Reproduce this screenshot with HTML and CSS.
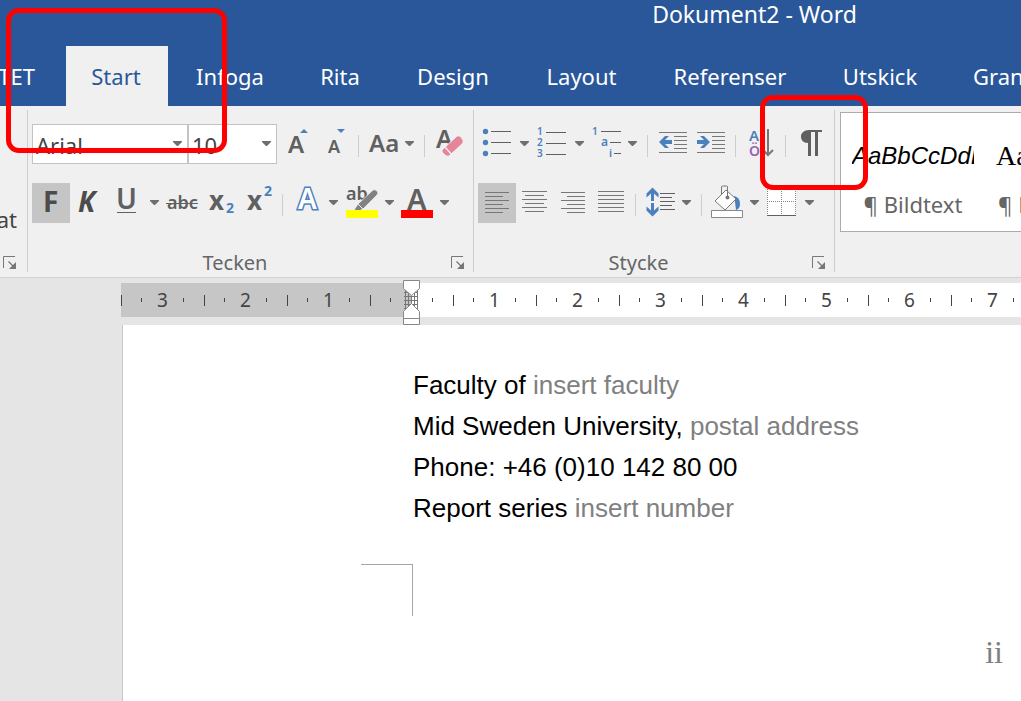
FILE: index.html
```html
<!DOCTYPE html>
<html lang="sv">
<head>
<meta charset="utf-8">
<title>Dokument2 - Word</title>
<link rel="stylesheet" href="styles.css">
</head>
<body>
<svg class="defs" aria-hidden="true">
  <symbol id="arrow" overflow="visible"><path d="M0 0h9v1l-4 4h-1l-4-4z" fill="#6f6f6f"/></symbol>
  <symbol id="launcher" viewBox="0 0 14 14"><path d="M.5 12V.5H12" fill="none" stroke="#777"/><path d="M5.500 5.500l5 5" stroke="#777" stroke-width="1.200"/><path d="M13 6v7H6z" fill="#777"/></symbol>
</svg>

<header class="titlebar">
  <h1 class="title">Dokument2 - Word</h1>
  <nav class="tabs">
    <a class="tab tab-cut" href="#">TET</a>
    <a class="tab tab-active" href="#">Start</a>
    <a class="tab w-124" href="#">Infoga</a>
    <a class="tab w-96" href="#">Rita</a>
    <a class="tab w-130" href="#">Design</a>
    <a class="tab w-127" href="#">Layout</a>
    <a class="tab w-170" href="#">Referenser</a>
    <a class="tab w-130" href="#">Utskick</a>
    <a class="tab tab-last" href="#">Granska</a>
  </nav>
</header>

<section class="ribbon">
  <div class="group group-clip">
    <span class="clip-text">at</span>
    <div class="group-foot"><button class="launch" aria-label="Urklipp"><svg width="14" height="14"><use href="#launcher"/></svg></button></div>
  </div>

  <div class="group">
    <div class="row">
      <span class="combo combo-font"><select aria-label="Teckensnitt"><option>Arial</option></select><svg class="chev" viewBox="0 0 9 5"><use href="#arrow"/></svg></span>
      <span class="combo combo-size"><select aria-label="Teckenstorlek"><option>10</option></select><svg class="chev" viewBox="0 0 9 5"><use href="#arrow"/></svg></span>
      <button class="tool" aria-label="Öka teckenstorlek"><svg width="38" height="40" viewBox="277 124 38 40"><text x="288" y="153" class="semi" font-size="24">A</text><path d="M300 133h8l-4-4z" fill="#4a80bd"/></svg></button>
      <button class="tool" aria-label="Minska teckenstorlek"><svg width="39" height="40" viewBox="315 124 39 40"><text x="328" y="153" class="semi" font-size="18">A</text><path d="M337 129h8l-4 4z" fill="#4a80bd"/></svg></button>
      <span class="sep"></span>
      <button class="tool" aria-label="Ändra skiftläge"><svg width="57" height="40" viewBox="363 124 57 40"><text x="369" y="152" class="semi" font-size="24">Aa</text><use href="#arrow" x="405" y="141"/></svg></button>
      <span class="sep"></span>
      <button class="tool" aria-label="Ta bort formatering"><svg width="40" height="40" viewBox="429 124 40 40"><text x="436" y="148" class="semi" font-size="25">A</text><path d="M442 150l15-14q2-1 4 1l2 3q1 2-1 4l-13 12q-2 1-4-1l-3-3z" fill="#e6859a" stroke="#f0f0f0"/><path d="M445 147l7 8" stroke="#f0f0f0" stroke-width="1.500"/></svg></button>
    </div>
    <div class="row">
      <button class="tool pressed" aria-label="Fet"><svg width="38" height="40" viewBox="32 183 38 40"><text x="43" y="212" font-weight="700" font-size="28">F</text></svg></button>
      <button class="tool" aria-label="Kursiv"><svg width="38" height="40" viewBox="70 183 38 40"><text x="78" y="212" class="dark" font-weight="700" font-style="italic" font-size="28">K</text></svg></button>
      <button class="tool" aria-label="Understruken"><svg width="55" height="40" viewBox="108 183 55 40"><text x="116" y="209" class="semi" font-size="28">U</text><path d="M117 212.500h19" stroke="#606060"/><use href="#arrow" x="150" y="200"/></svg></button>
      <button class="tool" aria-label="Genomstruken"><svg width="39" height="40" viewBox="163 183 39 40"><text x="167" y="209" font-size="18" class="semi">abc</text><path d="M166 203.500h32" stroke="#606060"/></svg></button>
      <button class="tool" aria-label="Nedsänkt"><svg width="38" height="40" viewBox="202 183 38 40"><text x="209" y="210" font-weight="700" font-size="26">x</text><text x="226" y="213" class="blue" font-weight="700" font-size="14">2</text></svg></button>
      <button class="tool" aria-label="Upphöjt"><svg width="38" height="40" viewBox="240 183 38 40"><text x="247" y="210" font-weight="700" font-size="26">x</text><text x="264" y="196" class="blue" font-weight="700" font-size="14">2</text></svg></button>
      <span class="sep"></span>
      <button class="tool" aria-label="Texteffekter"><svg width="54" height="40" viewBox="287 183 54 40"><text x="298" y="209" class="outline" font-size="28">A</text><use href="#arrow" x="329" y="200"/></svg></button>
      <button class="tool" aria-label="Överstrykningsfärg"><svg width="56" height="40" viewBox="341 183 56 40"><text x="346" y="200" class="semi" font-size="18">ab</text><path d="M354 210l4-6 15-14q2-1 4 1t0 4l-14 14-4 2z" fill="#828282" stroke="#f0f0f0" stroke-width=".8"/><path d="M358 204l5 5" stroke="#f0f0f0"/><path d="M346 210h32v8h-32z" fill="#ff0"/><use href="#arrow" x="385" y="200"/></svg></button>
      <button class="tool" aria-label="Teckenfärg"><svg width="55" height="40" viewBox="397 183 55 40"><text x="407" y="210" class="semi" font-size="29">A</text><path d="M401 210h32v8h-32z" fill="#f00"/><use href="#arrow" x="440" y="200"/></svg></button>
    </div>
    <div class="group-foot"><span class="group-name">Tecken</span><button class="launch" aria-label="Tecken"><svg width="14" height="14"><use href="#launcher"/></svg></button></div>
  </div>

  <div class="group">
    <div class="row">
      <button class="tool" aria-label="Punktlista"><svg width="55" height="40" viewBox="478 124 55 40"><g fill="#4a80bd"><circle cx="485.500" cy="131.500" r="2.700"/><circle cx="485.500" cy="142.500" r="2.700"/><circle cx="485.500" cy="153.500" r="2.700"/></g><path d="M491 131.500h20M491 142.500h20M491 153.500h20" stroke="#606060"/><use href="#arrow" x="520" y="141"/></svg></button>
      <button class="tool" aria-label="Numrering"><svg width="55" height="40" viewBox="533 124 55 40"><g class="blue semi" font-size="10"><text x="537" y="135">1</text><text x="537" y="146">2</text><text x="537" y="157">3</text></g><path d="M546 132.500h20M546 143.500h20M546 154.500h20" stroke="#606060"/><use href="#arrow" x="575" y="141"/></svg></button>
      <button class="tool" aria-label="Flernivålista"><svg width="55" height="40" viewBox="588 124 55 40"><g class="blue semi" font-size="10"><text x="592" y="135">1</text><text x="601" y="146" font-size="12">a</text><text x="609" y="157" font-size="11">i</text></g><path d="M601 131.500h20M610 142.500h11M614 153.500h7" stroke="#606060"/><use href="#arrow" x="628" y="141"/></svg></button>
      <span class="sep"></span>
      <button class="tool" aria-label="Minska indrag"><svg width="40" height="40" viewBox="652 124 40 40"><path d="M659 132.500h28M674 136.500h13M674 140.500h13M674 144.500h13M674 148.500h13M659 152.500h28" stroke="#777"/><path d="M659 142l6-6h4l-4 4h7v4h-7l4 4h-4z" fill="#4a80bd"/></svg></button>
      <button class="tool" aria-label="Öka indrag"><svg width="39" height="40" viewBox="692 124 39 40"><path d="M697 132.500h28M712 136.500h13M712 140.500h13M712 144.500h13M712 148.500h13M697 152.500h28" stroke="#777"/><path d="M710 142l-6-6h-4l4 4h-7v4h7l-4 4h4z" fill="#4a80bd"/></svg></button>
      <span class="sep"></span>
      <button class="tool" aria-label="Sortera"><svg width="41" height="40" viewBox="740 124 41 40"><text x="749" y="141" class="blue semi" font-size="15">A</text><text x="749" y="156" class="purple semi" font-size="14">Ö</text><path d="M768 129v26M763 150l5 5 5-5" fill="none" stroke="#777" stroke-width="2"/></svg></button>
      <span class="sep"></span>
      <button class="tool" aria-label="Visa alla"><svg width="40" height="40" viewBox="790 124 40 40"><path d="M822 130v2h-4v24h-3v-24h-4v24h-3v-13c-5 0-7-3-7-6.500s3-6.500 8-6.500z" fill="#606060"/></svg></button>
    </div>
    <div class="row">
      <button class="tool pressed" aria-label="Vänsterjustera"><svg width="38" height="40" viewBox="478 183 38 40"><path d="M485 192.500h24M485 196.500h18M485 200.500h24M485 204.500h18M485 208.500h24M485 212.500h18" stroke="#777"/></svg></button>
      <button class="tool" aria-label="Centrera"><svg width="38" height="40" viewBox="516 183 38 40"><path d="M522 191.500h25M525 195.500h19M522 199.500h25M525 203.500h19M522 207.500h25M525 211.500h19" stroke="#777"/></svg></button>
      <button class="tool" aria-label="Högerjustera"><svg width="38" height="40" viewBox="554 183 38 40"><path d="M561 192.500h24M567 196.500h18M561 200.500h24M567 204.500h18M561 208.500h24M567 212.500h18" stroke="#777"/></svg></button>
      <button class="tool" aria-label="Marginaljustera"><svg width="39" height="40" viewBox="592 183 39 40"><path d="M598 191.500h26M598 195.500h26M598 199.500h26M598 203.500h26M598 207.500h26M598 211.500h26" stroke="#777"/></svg></button>
      <span class="sep"></span>
      <button class="tool" aria-label="Radavstånd"><svg width="57" height="40" viewBox="640 183 57 40"><path d="M652.500 187.500l6 6v4l-4.500-4v7.500h-3v-7.500l-4.500 4v-4zM652.500 216.500l6-6v-4l-4.500 4v-7.500h-3v7.500l-4.500-4v4z" fill="#4a80bd"/><path d="M660 193.500h15M660 197.500h12M660 201.500h15M660 205.500h12M660 209.500h15" stroke="#606060"/><use href="#arrow" x="682" y="200"/></svg></button>
      <span class="sep"></span>
      <button class="tool" aria-label="Fyllning"><svg width="56" height="40" viewBox="706 183 56 40"><path d="M734 196q6 1 6 8 0 5-4 6l-1-8z" fill="#4a80bd"/><path d="M726 190l-11 11 10 9 11-11z" fill="#fff" stroke="#777"/><path d="M721.500 195v-8q0-1 1-1h4q1 0 1 1v9" fill="none" stroke="#777"/><circle cx="727.500" cy="197.500" r="2" fill="#777"/><path d="M711.500 210.500h31v7h-31z" fill="#fff" stroke="#888"/><use href="#arrow" x="750" y="200"/></svg></button>
      <button class="tool" aria-label="Kantlinjer"><svg width="58" height="40" viewBox="762 183 58 40"><path d="M767 187h29v28h-29z" fill="#fff"/><path d="M767.500 187v28M781.500 187v28M795.500 187v28M767 187.500h29M767 201.500h29" stroke="#888" stroke-dasharray="1 1"/><path d="M767 215.500h29" stroke="#606060"/><use href="#arrow" x="805" y="200"/></svg></button>
    </div>
    <div class="group-foot"><span class="group-name">Stycke</span><button class="launch" aria-label="Stycke"><svg width="14" height="14"><use href="#launcher"/></svg></button></div>
  </div>

  <div class="gallery">
    <button class="style-item"><span class="sample sample-caption">AaBbCcDdE</span><span class="style-name">¶ Bildtext</span></button>
    <button class="style-item"><span class="sample sample-body">AaBb</span><span class="style-name">¶ B</span></button>
  </div>
</section>

<main class="workspace">
  <div class="ruler">
    <div class="cm"><i></i><span>3</span><i></i></div>
    <div class="cm"><i></i><span>2</span><i></i></div>
    <div class="cm"><i></i><span>1</span><i></i></div>
    <div class="cm"><i></i><svg class="indent" width="17" height="45" viewBox="0 0 17 45"><path d="M1 12.500h14M1 16.500h14M1 20.500h14M1 24.500h14M1 28.500h14M2.500 10v20M5.500 10v20M8.500 10v20M11.500 10v20M14.500 10v20" stroke="#777"/><path d="M.5.500h16v8l-8 7-8-7z" fill="#fff" stroke="#888"/><path d="M.5 44.500v-13l8-8 8 8v13zM.5 38.500h16" fill="#fff" stroke="#888"/></svg><i></i></div>
    <div class="cm"><i></i><span>1</span><i></i></div>
    <div class="cm"><i></i><span>2</span><i></i></div>
    <div class="cm"><i></i><span>3</span><i></i></div>
    <div class="cm"><i></i><span>4</span><i></i></div>
    <div class="cm"><i></i><span>5</span><i></i></div>
    <div class="cm"><i></i><span>6</span><i></i></div>
    <div class="cm"><i></i><span>7</span><i></i></div>
  </div>
  <article class="page">
    <p>Faculty of <span class="hint">insert faculty</span></p>
    <p>Mid Sweden University, <span class="hint">postal address</span></p>
    <p>Phone: +46 (0)10 142 80 00</p>
    <p>Report series <span class="hint">insert number</span></p>
    <div class="crop-mark"></div>
    <footer class="folio">ii</footer>
  </article>
</main>

<div class="callout callout-start"></div>
<div class="callout callout-marks"></div>
</body>
</html>
```

FILE: styles.css
```css
* { box-sizing: border-box; }

body {
  margin: 0;
  min-height: 100vh;
  display: flex;
  flex-direction: column;
  overflow: hidden;
  position: relative;
  background: #e5e5e5;
  color: #444;
  font-family: "Noto Sans", "Open Sans", sans-serif;
  font-size: 22px;
}

button {
  padding: 0;
  border: 0;
  background: none;
  color: inherit;
  font: inherit;
}

svg { display: block; }
.defs { position: absolute; width: 0; height: 0; }

/* Title bar and tabs */
.titlebar { background: #2a579a; color: #fff; }

.title {
  margin: 0;
  height: 46px;
  padding-left: 488px;
  font-size: 23px;
  font-weight: 400;
  line-height: 28px;
  text-align: center;
}

.tabs { display: flex; height: 60px; overflow: hidden; }

.tab {
  flex: none;
  color: #fff;
  line-height: 60px;
  text-align: center;
  text-decoration: none;
}

.tab-cut { width: 66px; padding-right: 31px; direction: rtl; }
.tab-active { width: 102px; padding-right: 2px; background: #f0f0f0; color: #2a579a; }
.tab-last { padding-left: 28px; }
.w-96 { width: 96px; }
.w-124 { width: 124px; }
.w-127 { width: 127px; }
.w-130 { width: 130px; }
.w-170 { width: 170px; }

/* Ribbon */
.ribbon {
  display: flex;
  padding: 4px 0 5px;
  background: #f0f0f0;
  border-bottom: 1px solid #d2d2d2;
}

.group {
  flex: none;
  padding: 14px 4px 0;
  border-right: 1px solid #cdcdcd;
}

.group-clip {
  display: flex;
  flex-direction: column;
  align-items: flex-end;
  width: 28px;
  padding: 94px 10px 0 0;
}

.clip-text { line-height: 30px; }
.row { display: flex; height: 40px; }
.row + .row { margin-top: 19px; }

.combo { position: relative; background: #fff; border: 1px solid #c3c3c3; }
.combo-font { width: 156px; }
.combo-size { width: 89px; }

.combo select {
  width: 100%;
  height: 38px;
  padding: 2px 0 0 3px;
  border: 0;
  appearance: none;
  background: none;
  color: #444;
  font: inherit;
}

.chev { position: absolute; top: 16px; right: 5px; width: 9px; height: 5px; }
.tool { display: block; height: 40px; }
.pressed { background: #c5c5c5; }

.tool text { fill: #606060; }
.tool .semi { font-weight: 600; }
.tool .blue, .tool .blue text { fill: #4a80bd; }
.tool .purple { fill: #9a5fb8; }
.tool .dark, .pressed text { fill: #4c4c4c; }
.tool .outline {
  fill: #fff;
  stroke: #4a80bd;
  stroke-width: 3px;
  paint-order: stroke;
  font-weight: 600;
}

.sep { width: 1px; height: 22px; margin: 11px 4px 0; background: #cdcdcd; }

.group-foot {
  display: flex;
  align-items: center;
  height: 19px;
  margin-top: 30px;
  padding-right: 4px;
  color: #666;
  font-size: 20px;
  line-height: 19px;
}

.group-clip .group-foot { margin-top: 19px; padding: 0; }
.group-name { flex: 1; padding-right: 13px; text-align: center; }

/* Style gallery */
.gallery {
  flex: 1;
  display: flex;
  gap: 22px;
  height: 120px;
  margin: 2px 0 0 5px;
  padding-left: 11px;
  overflow: hidden;
  background: #fff;
  border: 1px solid #ababab;
  border-right: 0;
}

.style-item {
  flex: none;
  display: flex;
  flex-direction: column;
  align-items: center;
  width: 122px;
  padding-top: 27px;
}

.sample {
  align-self: stretch;
  overflow: hidden;
  color: #000;
  line-height: 32px;
  text-align: left;
}

.sample-caption { font-family: "Liberation Sans", sans-serif; font-size: 24px; font-style: italic; }
.sample-body { font-family: "Liberation Serif", serif; font-size: 28px; }
.style-name { padding-top: 16px; color: #666; line-height: 32px; }
.style-item + .style-item { align-items: flex-start; }
.style-item + .style-item .style-name { padding-left: 2px; }

/* Ruler and page */
.workspace { flex: 1; display: flex; flex-direction: column; }

.ruler {
  display: flex;
  height: 34px;
  margin: 5px 0 8px 121px;
  background: linear-gradient(to right, #c6c6c6 291px, #fff 291px);
}

.cm {
  position: relative;
  flex: none;
  display: flex;
  align-items: center;
  justify-content: space-between;
  width: 83px;
  padding: 0 20px;
  font-size: 19px;
}

.cm::before {
  content: "";
  position: absolute;
  top: 12px;
  left: 0;
  width: 1px;
  height: 11px;
  background: #444;
}

.cm i { width: 1px; height: 4px; background: #444; }
.indent { position: absolute; top: -3px; left: 33px; }

.page {
  flex: 1;
  margin-left: 122px;
  padding: 40px 18px 0 290px;
  background: #fff;
  border-left: 1px solid #c6c6c6;
  color: #000;
  font-family: "Liberation Sans", sans-serif;
  font-size: 26px;
  line-height: 41px;
}

.page p { margin: 0; white-space: nowrap; }
.hint { color: #808080; }

.crop-mark {
  width: 52px;
  height: 52px;
  margin: 35px 0 0 -52px;
  border-top: 1px solid #a6a6a6;
  border-right: 1px solid #a6a6a6;
}

.folio {
  margin-top: 16px;
  color: #808080;
  font-family: "Liberation Serif", serif;
  font-size: 32px;
  text-align: right;
}

/* Highlight frames drawn over the window */
.callout { position: absolute; border: 5px solid #f00; border-radius: 13px; pointer-events: none; }
.callout-start { top: 8px; left: 6px; width: 221px; height: 145px; }
.callout-marks { top: 95px; left: 760px; width: 108px; height: 95px; }
```
